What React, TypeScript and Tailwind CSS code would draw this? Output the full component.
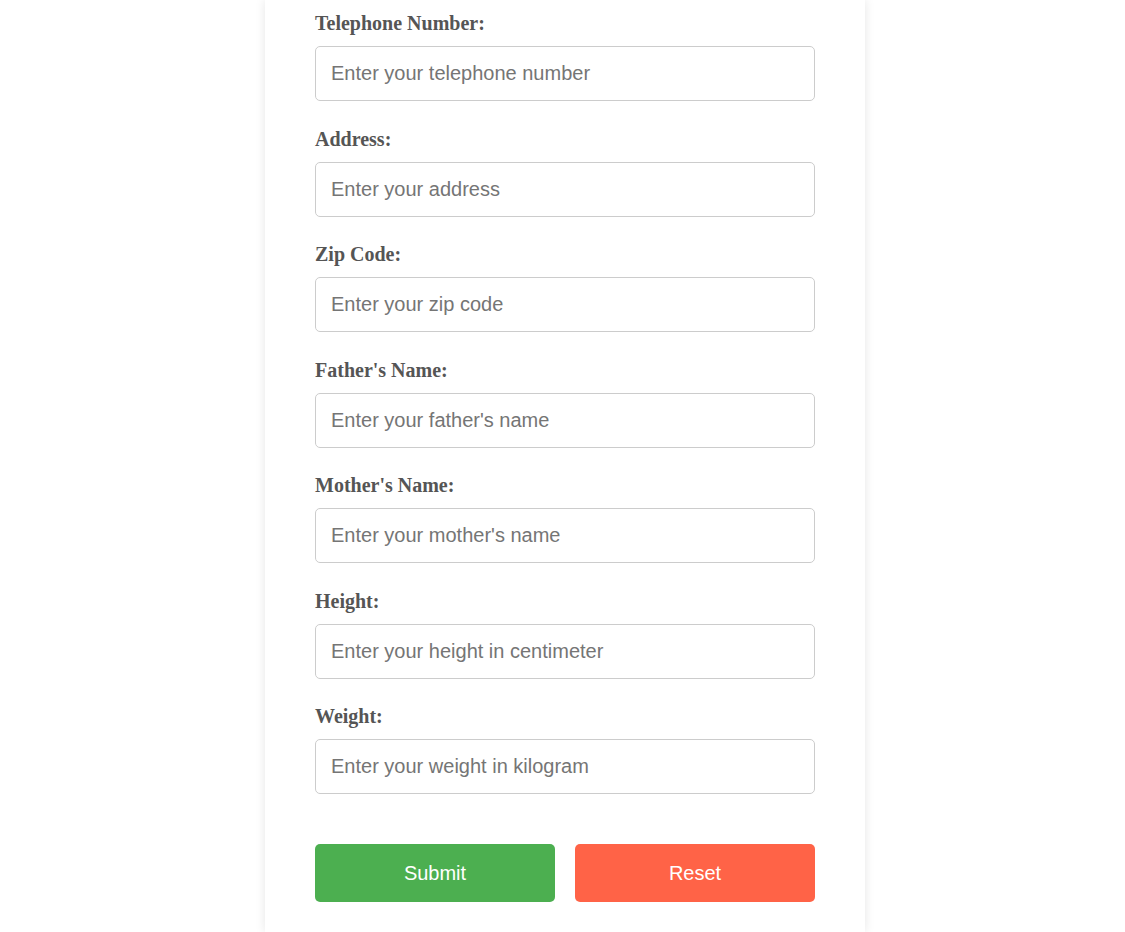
import React from "react";

const fields = [
  { label: "Telephone Number:", placeholder: "Enter your telephone number" },
  { label: "Address:", placeholder: "Enter your address" },
  { label: "Zip Code:", placeholder: "Enter your zip code" },
  { label: "Father's Name:", placeholder: "Enter your father's name" },
  { label: "Mother's Name:", placeholder: "Enter your mother's name" },
  { label: "Height:", placeholder: "Enter your height in centimeter" },
  { label: "Weight:", placeholder: "Enter your weight in kilogram" },
];

const App = () => {
  return (
    <div className="flex justify-center bg-white pl-[5px] min-h-[932px] font-['Liberation_Sans',Arial,sans-serif]">
      <form className="w-[600px] bg-white px-[50px] pt-[12px] pb-[30px] shadow-[0_0_10px_rgba(0,0,0,0.1)]">
        {fields.map((f) => (
          <div key={f.label} className="mb-[26.5px] last:mb-0">
            <label className="block h-[22px] mb-[12px] font-['Liberation_Serif','Times_New_Roman',serif] text-[20px] leading-[22px] font-bold text-[#555]">
              {f.label}
            </label>
            <input
              type="text"
              placeholder={f.placeholder}
              className="block w-full h-[55px] px-[15px] border border-[#ccc] rounded-[5px] text-[20px] text-[#333] placeholder:text-[#757575] outline-none"
            />
          </div>
        ))}
        <div className="flex gap-5 mt-[50px]">
          <button
            type="submit"
            className="flex-1 h-[58px] rounded-[5px] bg-[#4caf50] text-white text-[20px]"
          >
            Submit
          </button>
          <button
            type="reset"
            className="flex-1 h-[58px] rounded-[5px] bg-[#ff6347] text-white text-[20px]"
          >
            Reset
          </button>
        </div>
      </form>
    </div>
  );
};

export default App;
